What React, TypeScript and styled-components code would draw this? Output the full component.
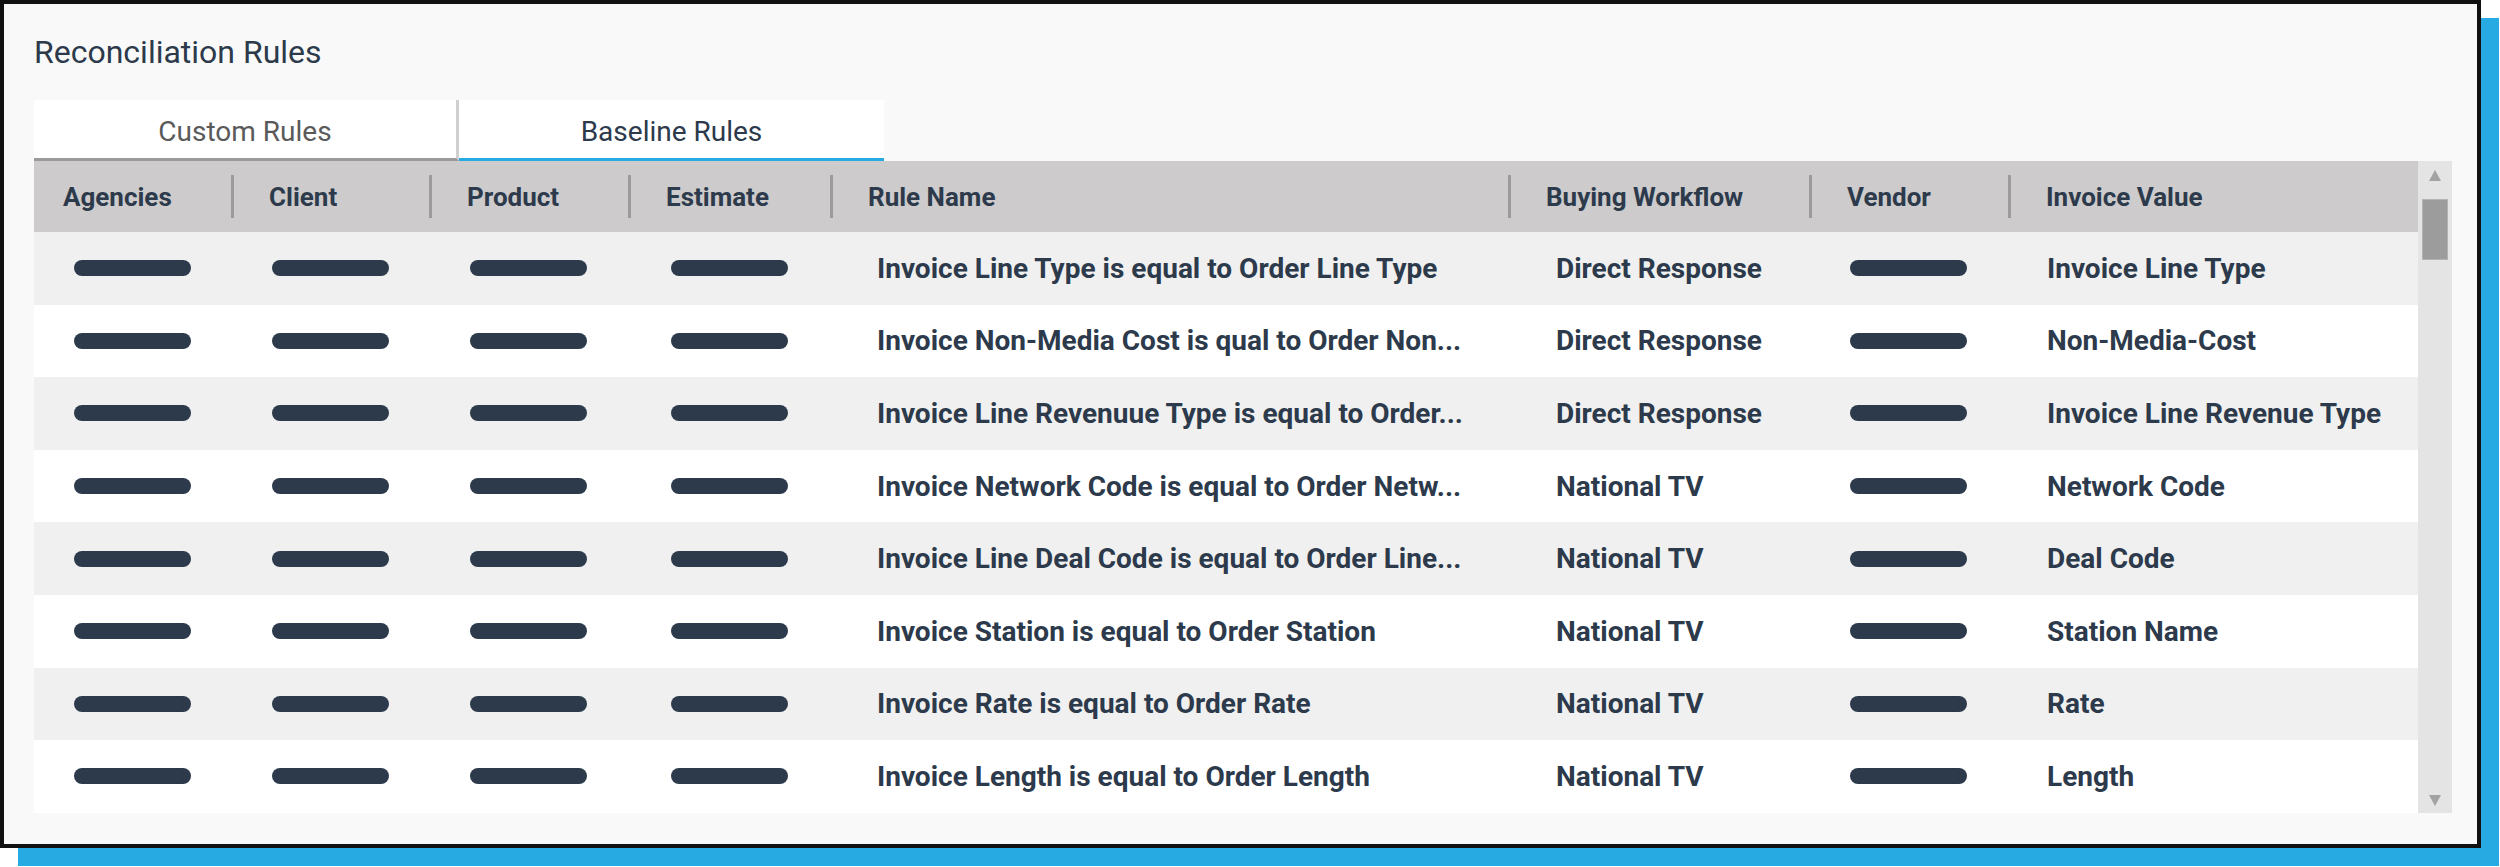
import React from "react";
import styled, { createGlobalStyle } from "styled-components";

const GlobalStyle = createGlobalStyle`
  html, body {
    margin: 0;
    padding: 0;
    background: #fff;
  }
  body {
    font-family: Roboto, "Liberation Sans", Arial, sans-serif;
  }
`;

const Page = styled.div`
  width: 2500px;
  height: 867px;
  overflow: hidden;
`;

const Frame = styled.div`
  box-sizing: border-box;
  width: 2481px;
  height: 848px;
  border: 4px solid #111;
  background: #f9f9f9;
  box-shadow: 18px 18px 0 #27a9e1;
  padding: 0 25px 31px 30px;
  display: flex;
  flex-direction: column;
`;

const Title = styled.h1`
  margin: 0;
  height: 96px;
  display: flex;
  align-items: center;
  font-size: 32px;
  font-weight: 400;
  color: #2c3a4b;
`;

const Tabs = styled.div`
  display: flex;
  height: 61px;
`;

const Tab = styled.div<{ $active?: boolean; $divider?: boolean }>`
  box-sizing: border-box;
  width: 425px;
  height: 61px;
  padding-top: 5px;
  display: flex;
  align-items: center;
  justify-content: center;
  background: #fff;
  font-size: 28px;
  color: ${(p) => (p.$active ? "#2c3a4b" : "#5a5a5a")};
  border-bottom: 3px solid ${(p) => (p.$active ? "#27a9e1" : "#9a9a9a")};
  border-right: ${(p) => (p.$divider ? "3px solid #d0d0d0" : "none")};
  cursor: pointer;
`;

const TableArea = styled.div`
  display: flex;
  flex: 1;
  min-height: 0;
`;

const Table = styled.div`
  width: 2384px;
  display: flex;
  flex-direction: column;
`;

const COLUMNS = "197px 198px 199px 202px 678px 301px 199px 410px";

const HeaderRow = styled.div`
  display: grid;
  grid-template-columns: ${COLUMNS};
  height: 71px;
  background: #cdcbcb;
`;

const HeaderCell = styled.div<{ $first?: boolean }>`
  display: flex;
  align-items: center;
  padding-left: ${(p) => (p.$first ? "29px" : "0")};
  font-size: 26px;
  font-weight: 700;
  color: #2c3a4b;
  white-space: nowrap;

  ${(p) =>
    !p.$first &&
    `
    &::before {
      content: "";
      flex: none;
      width: 3px;
      height: 43px;
      background: #9b9b9b;
      margin-right: 35px;
    }
  `}
`;

const BodyRow = styled.div<{ $alt?: boolean }>`
  display: grid;
  grid-template-columns: ${COLUMNS};
  height: 72.6px;
  background: ${(p) => (p.$alt ? "#f0f0f0" : "#fff")};
`;

const Cell = styled.div<{ $pad?: number; $center?: boolean; $clip?: boolean }>`
  display: flex;
  align-items: center;
  justify-content: ${(p) => (p.$center ? "center" : "flex-start")};
  padding-left: ${(p) => p.$pad ?? 0}px;
  padding-right: ${(p) => (p.$clip ? 30 : 0)}px;
  min-width: 0;
`;

const CellText = styled.span`
  font-size: 28px;
  font-weight: 700;
  color: #2c3a4b;
  white-space: nowrap;
  overflow: hidden;
  text-overflow: ellipsis;
`;

const Pill = styled.span`
  display: block;
  width: 117px;
  height: 16px;
  border-radius: 8px;
  background: #2c3a4b;
`;

const Scrollbar = styled.div`
  width: 34px;
  display: flex;
  flex-direction: column;
  align-items: center;
  background: #e4e4e4;
  padding: 9px 0 7px;
  box-sizing: border-box;
  height: 652px;
`;

const Thumb = styled.div`
  box-sizing: border-box;
  margin-top: 18px;
  width: 26px;
  height: 61px;
  background: #9c9c9c;
  border: 1px solid #b3b3b3;
`;

const Spacer = styled.div`
  flex: 1;
`;

const Arrow = ({ down }: { down?: boolean }) => (
  <svg width="12" height="11" viewBox="0 0 12 11">
    <path d={down ? "M0 0 L12 0 L6 11 Z" : "M6 0 L12 11 L0 11 Z"} fill="#a3a3a3" />
  </svg>
);

const headers = [
  "Agencies",
  "Client",
  "Product",
  "Estimate",
  "Rule Name",
  "Buying Workflow",
  "Vendor",
  "Invoice Value",
];

const rules = [
  {
    name: "Invoice Line Type is equal to Order Line Type",
    workflow: "Direct Response",
    value: "Invoice Line Type",
  },
  {
    name: "Invoice Non-Media Cost is qual to Order Non...",
    workflow: "Direct Response",
    value: "Non-Media-Cost",
  },
  {
    name: "Invoice Line Revenuue Type is equal to Order...",
    workflow: "Direct Response",
    value: "Invoice Line Revenue Type",
  },
  {
    name: "Invoice Network Code is equal to Order Netw...",
    workflow: "National TV",
    value: "Network Code",
  },
  {
    name: "Invoice Line Deal Code is equal to Order Line...",
    workflow: "National TV",
    value: "Deal Code",
  },
  {
    name: "Invoice Station is equal to Order Station",
    workflow: "National TV",
    value: "Station Name",
  },
  {
    name: "Invoice Rate is equal to Order Rate",
    workflow: "National TV",
    value: "Rate",
  },
  {
    name: "Invoice Length is equal to Order Length",
    workflow: "National TV",
    value: "Length",
  },
];

const App = () => {
  return (
    <Page>
      <GlobalStyle />
      <Frame>
        <Title>Reconciliation Rules</Title>
        <Tabs>
          <Tab $divider>Custom Rules</Tab>
          <Tab $active>Baseline Rules</Tab>
        </Tabs>
        <TableArea>
          <Table>
            <HeaderRow>
              {headers.map((h, i) => (
                <HeaderCell key={h} $first={i === 0}>
                  {h}
                </HeaderCell>
              ))}
            </HeaderRow>
            {rules.map((r, i) => (
              <BodyRow key={r.name} $alt={i % 2 === 0}>
                <Cell $center><Pill /></Cell>
                <Cell $center><Pill /></Cell>
                <Cell $center><Pill /></Cell>
                <Cell $center><Pill /></Cell>
                <Cell $pad={47} $clip>
                  <CellText>{r.name}</CellText>
                </Cell>
                <Cell $pad={48}>
                  <CellText>{r.workflow}</CellText>
                </Cell>
                <Cell $center><Pill /></Cell>
                <Cell $pad={39}>
                  <CellText>{r.value}</CellText>
                </Cell>
              </BodyRow>
            ))}
          </Table>
          <Scrollbar>
            <Arrow />
            <Thumb />
            <Spacer />
            <Arrow down />
          </Scrollbar>
        </TableArea>
      </Frame>
    </Page>
  );
};

export default App;
